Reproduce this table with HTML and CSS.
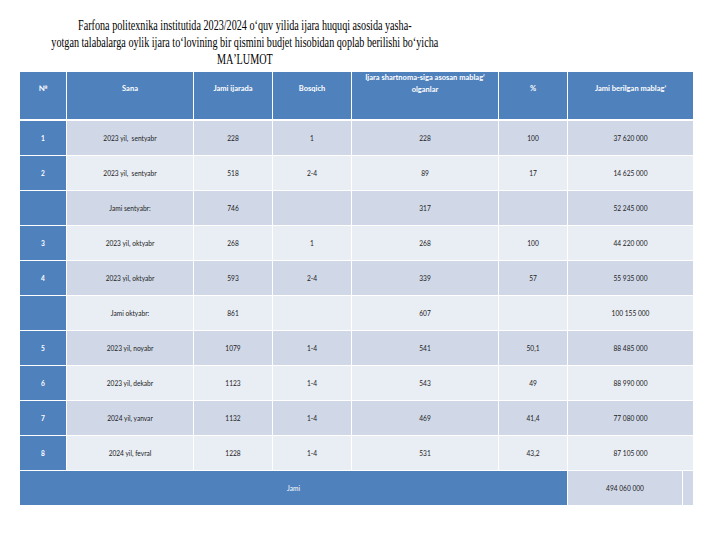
FILE: index.html
```html
<!DOCTYPE html>
<html>
<head>
<meta charset="utf-8">
<link rel="stylesheet" href="styles.css">
</head>
<body>
<div class="title">
  <div class="title-inner">Farfona politexnika institutida 2023/2024 oʻquv yilida ijara huquqi asosida yasha-<br>yotgan talabalarga oylik ijara toʻlovining bir qismini budjet hisobidan qoplab berilishi boʻyicha<br>MAʼLUMOT</div>
</div>
<div class="grid">
  <div class="h">№</div>
  <div class="h">Sana</div>
  <div class="h">Jami ijarada</div>
  <div class="h">Bosqich</div>
  <div class="h h2">Ijara shartnoma-siga asosan mablagʻ<br>olganlar</div>
  <div class="h">%</div>
  <div class="h span2">Jami berilgan mablagʻ</div>

  <div class="n">1</div><div class="c d">2023 yil,&nbsp; sentyabr</div><div class="c d">228</div><div class="c d">1</div><div class="c d">228</div><div class="c d">100</div><div class="c d span2">37 620 000</div>
  <div class="n">2</div><div class="c l">2023 yil,&nbsp; sentyabr</div><div class="c l">518</div><div class="c l">2-4</div><div class="c l">89</div><div class="c l">17</div><div class="c l span2">14 625 000</div>
  <div class="n"></div><div class="c d">Jami sentyabr:</div><div class="c d">746</div><div class="c d"></div><div class="c d">317</div><div class="c d"></div><div class="c d span2">52 245 000</div>
  <div class="n">3</div><div class="c l">2023 yil, oktyabr</div><div class="c l">268</div><div class="c l">1</div><div class="c l">268</div><div class="c l">100</div><div class="c l span2">44 220 000</div>
  <div class="n">4</div><div class="c d">2023 yil, oktyabr</div><div class="c d">593</div><div class="c d">2-4</div><div class="c d">339</div><div class="c d">57</div><div class="c d span2">55 935 000</div>
  <div class="n"></div><div class="c l">Jami oktyabr:</div><div class="c l">861</div><div class="c l"></div><div class="c l">607</div><div class="c l"></div><div class="c l span2">100 155 000</div>
  <div class="n">5</div><div class="c d">2023 yil, noyabr</div><div class="c d">1079</div><div class="c d">1-4</div><div class="c d">541</div><div class="c d">50,1</div><div class="c d span2">88 485 000</div>
  <div class="n">6</div><div class="c l">2023 yil, dekabr</div><div class="c l">1123</div><div class="c l">1-4</div><div class="c l">543</div><div class="c l">49</div><div class="c l span2">88 990 000</div>
  <div class="n">7</div><div class="c d">2024 yil, yanvar</div><div class="c d">1132</div><div class="c d">1-4</div><div class="c d">469</div><div class="c d">41,4</div><div class="c d span2">77 080 000</div>
  <div class="n">8</div><div class="c l">2024 yil, fevral</div><div class="c l">1228</div><div class="c l">1-4</div><div class="c l">531</div><div class="c l">43,2</div><div class="c l span2">87 105 000</div>

  <div class="foot">Jami</div>
  <div class="c d">494 060 000</div>
  <div class="c d"></div>
</div>
</body>
</html>
```
FILE: styles.css
```css
html, body {
  margin: 0;
  padding: 0;
  background: #ffffff;
}
.title {
  width: 490px;
  height: 55px;
  padding-top: 17px;
  display: flex;
  justify-content: center;
  text-align: center;
  font-family: "Liberation Serif", "Times New Roman", serif;
  font-size: 14px;
  line-height: 17px;
  color: #000;
}
.title-inner {
  flex: none;
  transform: scaleX(0.725);
  transform-origin: 50% 50%;
  white-space: nowrap;
}
.grid {
  margin: 0 0 0 20px;
  width: 673px;
  display: grid;
  grid-template-columns: 46px 126px 78px 78px 146px 68px 114px 10px;
  grid-template-rows: 48px repeat(10, 34px) 34px;
  column-gap: 1px;
  row-gap: 1px;
  background: #ffffff;
  font-family: Lato, "Open Sans", sans-serif;
  font-size: 6.6px;
}
.h {
  background: #4f81bd;
  color: #ffffff;
  font-weight: 700;
  font-size: 7.5px;
  text-align: center;
  line-height: 12px;
  padding-top: 11px;
  margin-bottom: 1px;
}
.h2 {
  padding-top: 0;
}
.span2 {
  grid-column: span 2;
}
.n {
  background: #4f81bd;
  color: #ffffff;
  font-weight: 700;
  display: flex;
  align-items: center;
  justify-content: center;
}
.c {
  display: flex;
  align-items: center;
  justify-content: center;
  color: #222222;
}
.d {
  background: #d0d8e8;
}
.l {
  background: #e9edf4;
}
.foot {
  grid-column: span 6;
  background: #4f81bd;
  color: #ffffff;
  display: flex;
  align-items: center;
  justify-content: center;
}
```
